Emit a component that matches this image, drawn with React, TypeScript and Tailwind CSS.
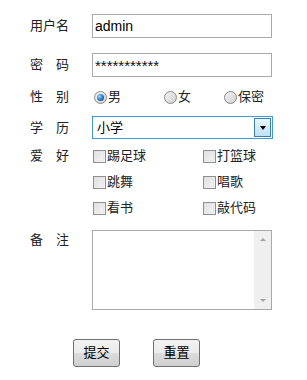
import React from 'react';

const font = { fontFamily: '"Segoe UI", "Liberation Sans", "Noto Sans CJK SC", sans-serif' };

function Label({ chars }: { chars: string[] }) {
  return (
    <div className="w-[62px] shrink-0">
      <div className="flex w-[39px] justify-between text-[13px] text-[#222]">
        {chars.map((c, i) => (
          <span key={i}>{c}</span>
        ))}
      </div>
    </div>
  );
}

function Radio({ checked }: { checked?: boolean }) {
  return (
    <span className="flex h-[13px] w-[13px] items-center justify-center rounded-full border border-[#8a8a8a] bg-gradient-to-br from-[#f4f4f4] to-[#cfcfcf]">
      {checked && <span className="h-[7px] w-[7px] rounded-full bg-[radial-gradient(circle_at_35%_35%,#9fd4f7,#1a6fb5_60%,#0e3f7a)]" />}
    </span>
  );
}

function Check({ label }: { label: string }) {
  return (
    <div className="flex w-[110px] items-center">
      <span className="mr-[1px] h-[13px] w-[13px] border border-[#8f8f8f] bg-gradient-to-br from-[#dcdcdc] to-[#f8f8f8] p-[1px]">
        <span className="block h-full w-full border border-[#e8e8e8]" />
      </span>
      <span className="text-[13px] text-[#222]">{label}</span>
    </div>
  );
}

function Btn({ text }: { text: string }) {
  return (
    <div className="flex h-[28px] w-[47px] items-center justify-center rounded-[3px] border border-[#707070] bg-[linear-gradient(#f2f2f2_0%,#ebebeb_50%,#dddddd_51%,#cfcfcf_100%)] text-[13px] text-black">
      {text}
    </div>
  );
}

export default function App() {
  return (
    <div className="h-[380px] w-[307px] bg-white pl-[30px] pt-[14px]" style={font}>
      <div className="flex h-[24px] items-center">
        <Label chars={['用', '户', '名']} />
        <div className="flex h-[24px] w-[180px] items-center border border-[#a9a9a9] pl-[2px] text-[14px] text-black">admin</div>
      </div>
      <div className="mt-[15px] flex h-[24px] items-center">
        <Label chars={['密', '码']} />
        <div className="flex h-[24px] w-[180px] items-center border border-[#a9a9a9] pl-[2px] pt-[3px] text-[15px] text-[#111]">***********</div>
      </div>
      <div className="mt-[10px] flex h-[20px] items-center">
        <Label chars={['性', '别']} />
        <div className="flex items-center text-[13px] text-[#222]">
          <div className="ml-[2px] flex w-[70px] items-center gap-[1px]">
            <Radio checked />
            <span>男</span>
          </div>
          <div className="flex w-[60px] items-center gap-[1px]">
            <Radio />
            <span>女</span>
          </div>
          <div className="flex items-center gap-[1px]">
            <Radio />
            <span>保密</span>
          </div>
        </div>
      </div>
      <div className="mt-[9px] flex h-[23px] items-center">
        <Label chars={['学', '历']} />
        <div className="flex h-[23px] w-[181px] items-center border border-[#3c9bd8] bg-white">
          <span className="flex-1 pl-[4px] text-[13px] text-black">小学</span>
          <span className="mr-[1px] flex h-[19px] w-[17px] items-center justify-center border border-[#3c7fb1] bg-gradient-to-b from-[#eaf6fd] to-[#bde2f7]">
            <span className="h-0 w-0 border-x-[3.5px] border-t-[4px] border-x-transparent border-t-black" />
          </span>
        </div>
      </div>
      <div className="mt-[4px] flex items-start">
        <div className="flex h-[26px] items-center">
          <Label chars={['爱', '好']} />
        </div>
        <div className="ml-[1px] flex flex-col">
          {[
            ['踢足球', '打篮球'],
            ['跳舞', '唱歌'],
            ['看书', '敲代码'],
          ].map((row, i) => (
            <div key={i} className="flex h-[26px] items-center">
              <Check label={row[0]} />
              <Check label={row[1]} />
            </div>
          ))}
        </div>
      </div>
      <div className="mt-[9px] flex items-start">
        <div className="flex h-[20px] items-center">
          <Label chars={['备', '注']} />
        </div>
        <div className="flex h-[80px] w-[180px] border border-[#a9a9a9] bg-white">
          <div className="flex-1" />
          <div className="flex w-[17px] flex-col items-center justify-between bg-[#efefef] py-[7px]">
            <span className="h-0 w-0 border-x-[3px] border-b-[3px] border-x-transparent border-b-[#a3a3a3]" />
            <span className="h-0 w-0 border-x-[3px] border-t-[3px] border-x-transparent border-t-[#a3a3a3]" />
          </div>
        </div>
      </div>
      <div className="ml-[43px] mt-[29px] flex gap-[33px]">
        <Btn text="提交" />
        <Btn text="重置" />
      </div>
    </div>
  );
}
